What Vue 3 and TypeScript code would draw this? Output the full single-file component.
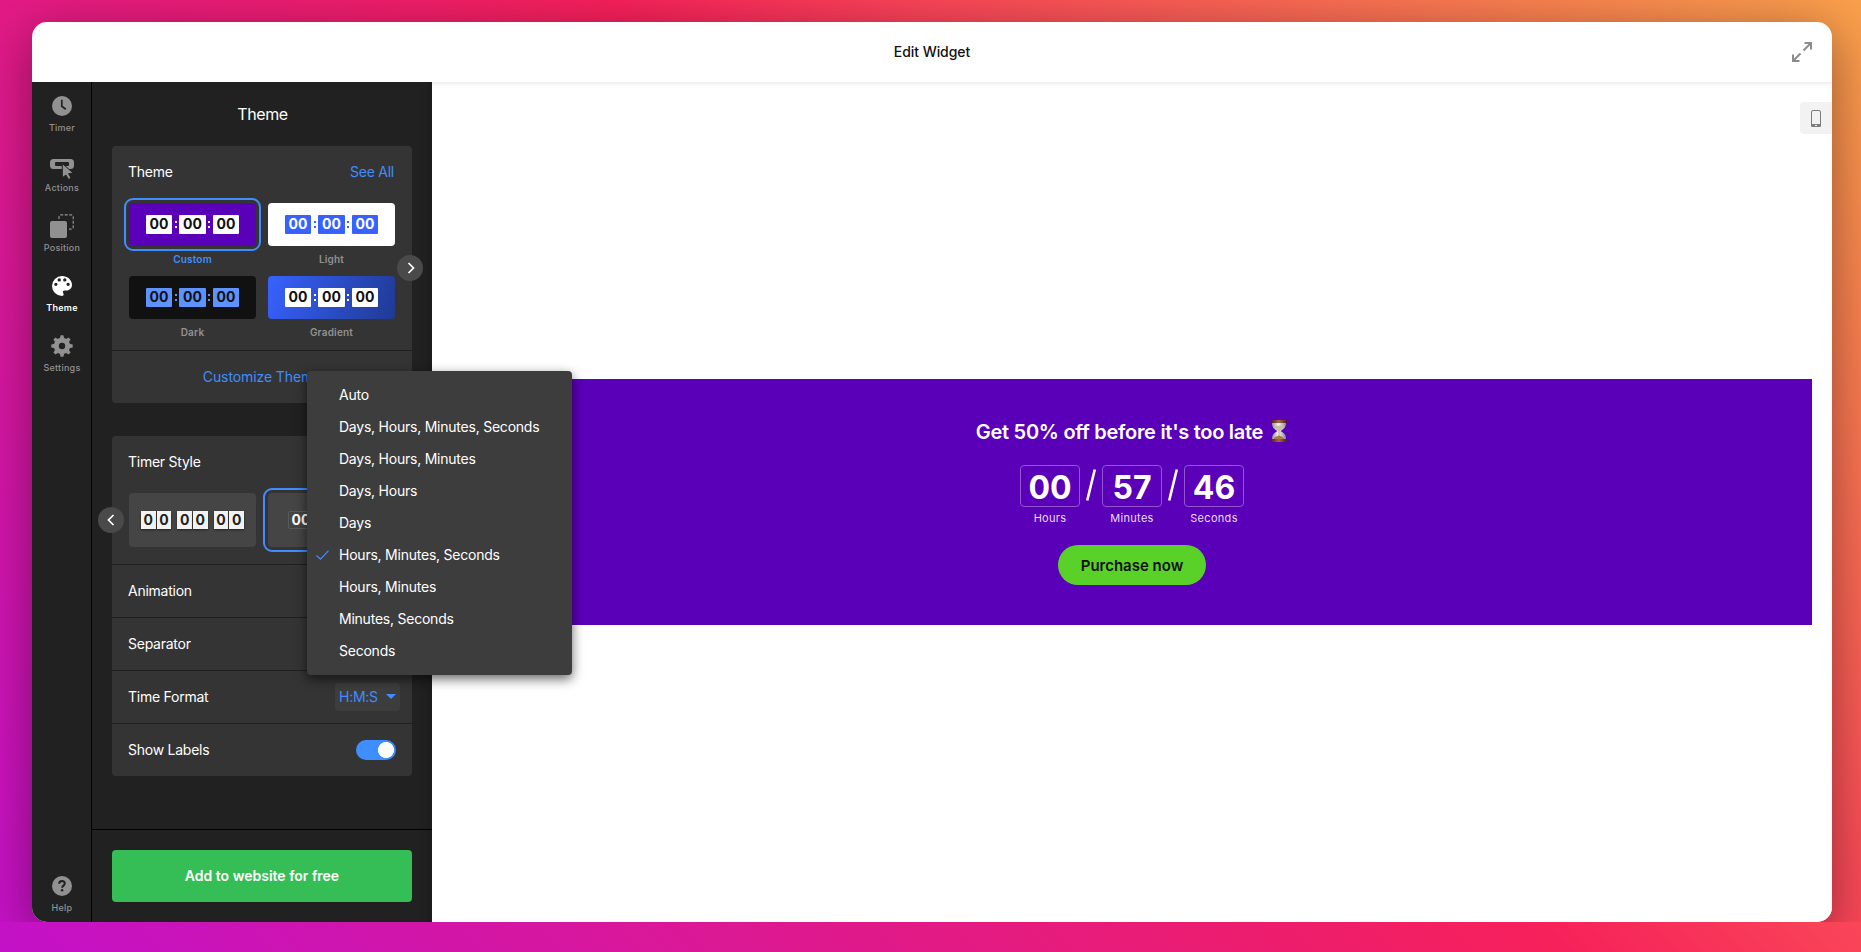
<script setup lang="ts">
interface Theme { name: string; key: string }
const themes: Theme[] = [
  { name: 'Custom', key: 'custom' },
  { name: 'Light', key: 'light' },
  { name: 'Dark', key: 'dark' },
  { name: 'Gradient', key: 'gradient' },
]
const formats: string[] = [
  'Auto', 'Days, Hours, Minutes, Seconds', 'Days, Hours, Minutes', 'Days, Hours', 'Days',
  'Hours, Minutes, Seconds', 'Hours, Minutes', 'Minutes, Seconds', 'Seconds',
]
const selectedFormat = 'Hours, Minutes, Seconds'
const units = [
  { value: '00', label: 'Hours' },
  { value: '57', label: 'Minutes' },
  { value: '46', label: 'Seconds' },
]
</script>

<template>
  <div class="page">
    <div class="stage">
      <div class="window">
        <header class="topbar">
          <span>Edit Widget</span>
          <svg class="expand" width="20" height="20" viewBox="0 0 20 20" fill="none" stroke="#8c8c8c" stroke-width="2">
            <path d="M12.500 1H19v6.500M19 1l-7.500 7.500M7.500 19H1v-6.500M1 19l7.500-7.500" />
          </svg>
        </header>
        <div class="body">
          <nav class="rail">
            <div class="tab">
              <svg width="20" height="20" viewBox="0 0 20 20"><circle cx="10" cy="10" r="10" fill="#919191" /><path d="M9.800 3.800v6.500l4 2.900" fill="none" stroke="#212121" stroke-width="1.700" /></svg>
              <span>Timer</span>
            </div>
            <div class="tab">
              <svg class="actions" width="24" height="20" viewBox="0 0 24 20"><rect x="2.500" y="3.500" width="19" height="5" rx="1" fill="none" stroke="#919191" stroke-width="5" stroke-linejoin="round" /><rect x="5" y="4" width="14" height="4" rx="1" fill="#212121" /><path d="M12.300 5.500l11 9.600-4.700.6 2.500 4.500-2.600 1.200-2.600-4.400-3.600 2.800z" fill="#919191" stroke="#212121" stroke-width="1" /></svg>
              <span>Actions</span>
            </div>
            <div class="tab">
              <svg class="pos" width="24" height="24" viewBox="0 0 24 24"><rect x="0" y="7" width="17" height="17" rx="2" fill="#919191" /><path d="M9 5V2.500A2 2 0 0 1 10.500 .8H21.500A1.800 1.800 0 0 1 23.200 2.500V13.500A1.800 1.800 0 0 1 21.500 15.200H19" fill="none" stroke="#919191" stroke-width="1.200" stroke-dasharray="3 1.500" /></svg>
              <span>Position</span>
            </div>
            <div class="tab active">
              <svg width="20" height="20" viewBox="3 3 18 18"><path fill="#fff" d="M12 3a9 9 0 0 0 0 18c.83 0 1.500-.67 1.500-1.500 0-.39-.15-.74-.39-1.010-.23-.26-.38-.61-.38-.99 0-.83.67-1.500 1.500-1.500H16c2.760 0 5-2.240 5-5 0-4.420-4.030-8-9-8zm-5.500 9a1.500 1.500 0 1 1 0-3 1.500 1.500 0 0 1 0 3zm3-4a1.500 1.500 0 1 1 0-3 1.500 1.500 0 0 1 0 3zm5 0a1.500 1.500 0 1 1 0-3 1.500 1.500 0 0 1 0 3zm3 4a1.500 1.500 0 1 1 0-3 1.500 1.500 0 0 1 0 3z" /></svg>
              <span>Theme</span>
            </div>
            <div class="tab">
              <svg class="gear" width="22" height="22" viewBox="0 0 22 22">
                <g fill="#919191">
                  <path v-for="n in 8" :key="n" d="M8.700 4L9.600 .3h2.800L13.300 4z" :transform="`rotate(${n * 45} 11 11)`" />
                </g>
                <circle cx="11" cy="11" r="5.700" fill="none" stroke="#919191" stroke-width="5" />
              </svg>
              <span>Settings</span>
            </div>
            <div class="tab help">
              <svg width="20" height="20" viewBox="0 0 20 20"><circle cx="10" cy="10" r="10" fill="#919191" /><path d="M7.200 7.800c0-1.700 1.200-2.700 2.800-2.700s2.800 1 2.800 2.500c0 2-2.700 2.100-2.700 4.200" fill="none" stroke="#212121" stroke-width="2" /><circle cx="10.100" cy="14.300" r="1.250" fill="#212121" /></svg>
              <span>Help</span>
            </div>
          </nav>

          <aside class="panel">
            <h1>Theme</h1>
            <section class="card themes">
              <div class="card-head"><span>Theme</span><a>See All</a></div>
              <div class="grid">
                <div v-for="t in themes" :key="t.key" class="theme" :class="t.key">
                  <div class="thumb">
                    <b>00</b><i></i><b>00</b><i></i><b>00</b>
                  </div>
                  <span>{{ t.name }}</span>
                </div>
              </div>
              <div class="customize"><a>Customize Theme</a></div>
              <button class="arrow next"><svg width="8" height="12" viewBox="0 0 8 12"><path d="M1.500 1L6.500 6l-5 5" /></svg></button>
            </section>

            <section class="card">
              <div class="card-head"><span>Timer Style</span></div>
              <div class="styles">
                <div class="style-thumb flip">
                  <div v-for="g in 3" :key="g" class="pair"><b>0</b><b>0</b></div>
                </div>
                <div class="style-thumb boxed"><b>00</b><b>00</b></div>
              </div>
              <div class="row"><span>Animation</span></div>
              <div class="row"><span>Separator</span></div>
              <div class="row"><span>Time Format</span>
                <div class="select">H:M:S<svg width="10" height="5" viewBox="0 0 10 5"><path d="M0 0h10L5 5z" fill="#3e8eff" /></svg></div>
              </div>
              <div class="row"><span>Show Labels</span><div class="toggle"></div></div>
              <button class="arrow prev"><svg width="8" height="12" viewBox="0 0 8 12"><path d="M6.500 1L1.500 6l5 5" /></svg></button>
            </section>
            <footer class="foot"><button class="add">Add to website for free</button></footer>
          </aside>

          <main class="preview">
            <div class="device"><svg width="10" height="17" viewBox="0 0 10 17"><rect x=".5" y=".5" width="9" height="16" rx="1.500" fill="none" stroke="#7d7d7d" /><path d="M0 14h10v1.500a1.500 1.500 0 0 1-1.500 1.500h-7A1.500 1.500 0 0 1 0 15.500z" fill="#7d7d7d" /><rect x="4" y="15" width="2" height="1" fill="#f2f2f2" /></svg></div>
            <div class="banner">
              <h2><span>Get 50% off before it's too late</span>
                <svg class="hourglass" width="18" height="22" viewBox="0 0 18 22">
                  <defs>
                    <linearGradient id="wood" x1="0" x2="1"><stop offset="0" stop-color="#4a2014" /><stop offset=".5" stop-color="#a8674a" /><stop offset="1" stop-color="#451d12" /></linearGradient>
                    <linearGradient id="glass" x1="0" x2="1"><stop offset="0" stop-color="#8f8ba0" /><stop offset=".45" stop-color="#f4f4f2" /><stop offset="1" stop-color="#8d899e" /></linearGradient>
                  </defs>
                  <path d="M2 2.500h14c.3 4-1.500 6.300-5.400 8.500 3.900 2.200 5.700 4.600 5.400 8.500H2c-.3-3.900 1.500-6.300 5.400-8.500C3.500 8.800 1.700 6.500 2 2.500z" fill="url(#glass)" />
                  <path d="M3.300 5.800h11.400c-.6 1.800-2.300 3.300-5 4.700H8.300C5.600 9.100 3.900 7.600 3.300 5.800z" fill="#c9bda6" />
                  <path d="M9 15.500c2.700.8 5 2 5.800 4H3.200c.8-2 3.100-3.200 5.800-4z" fill="#ad7746" />
                  <path d="M8.600 10h.8v6h-.8z" fill="#b6906a" />
                  <rect x="1" y="0" width="16" height="3" rx="1" fill="url(#wood)" /><rect x="1" y="19" width="16" height="3" rx="1" fill="url(#wood)" />
                </svg>
              </h2>
              <div class="timer">
                <template v-for="(u, n) in units" :key="u.label">
                  <svg v-if="n" class="slash" width="22" height="42" viewBox="0 0 22 42"><path d="M7.200 35.500L14.800 4.500" stroke="#fff" stroke-width="2.600" /></svg>
                  <div class="unit"><strong>{{ u.value }}</strong><span>{{ u.label }}</span></div>
                </template>
              </div>
              <button class="cta">Purchase now</button>
            </div>
          </main>
        </div>
        <ul class="menu">
          <li v-for="f in formats" :key="f">
            <svg v-if="f === selectedFormat" width="13" height="10" viewBox="0 0 13 10"><path d="M.5 5.500L4.500 9.200 12.500 .7" fill="none" stroke="#3e8eff" stroke-width="1.200" /></svg>
            {{ f }}
          </li>
        </ul>
      </div>
    </div>
  </div>
</template>

<style>
body { margin: 0; }
</style>

<style scoped>
* { box-sizing: border-box; }
.page { width: 1861px; height: 952px; overflow: hidden; background: linear-gradient(45deg, #c311c8 0%, #f6205a 55.500%, #f94358 66%, #f8a04b 100%); font-family: Inter, "Liberation Sans", sans-serif; font-size: 14px; }
.stage { height: 922px; padding: 22px 29px 0 32px; overflow: hidden; }
.window { position: relative; width: 1800px; height: 900px; border-radius: 15px; box-shadow: 0 12px 50px rgba(0, 0, 0, .4); background: #fff; display: flex; flex-direction: column; }
.topbar { height: 60px; display: flex; align-items: center; justify-content: center; position: relative; color: #111; font-weight: 500; z-index: 1; padding-bottom: 1px; letter-spacing: -.05px; }
.expand { position: absolute; right: 20px; top: 20px; }
.body { flex: 1; display: flex; border-radius: 0 0 15px 15px; overflow: hidden; }
.rail { width: 60px; background: #212121; border-right: 1px solid #000; display: flex; flex-direction: column; align-items: center; padding: 14px 0 0 1px; }
.tab { height: 60px; display: flex; flex-direction: column; align-items: center; color: #919191; font-size: 9px; font-weight: 500; letter-spacing: .25px; }
.tab svg { display: block; margin-bottom: 6px; overflow: visible; }
.tab span { line-height: 12px; }
.tab .actions { margin: 2px 0 4px; }
.tab .pos { margin: -2px 0 4px; }
.tab .gear { margin: -1px 0 5px; }
.tab.active { color: #fff; font-weight: 600; }
.tab.help { margin-top: auto; height: 46px; }
.panel { width: 340px; background: #212121; padding: 0 20px; display: flex; flex-direction: column; box-shadow: inset -10px 0 12px -10px rgba(0, 0, 0, .35); }
h1 { margin: 0; height: 64px; line-height: 65px; text-align: center; color: #fff; font-size: 16px; font-weight: 400; letter-spacing: -.4px; padding-left: 1px; }
a { color: #3e8eff; }
.card { position: relative; background: #343434; border-radius: 4px; color: #fff; margin-bottom: 33px; letter-spacing: -.25px; }
.card-head { height: 52px; padding: 0 18px 2px 16px; display: flex; align-items: center; justify-content: space-between; }
.themes .card-head { height: 57px; padding-bottom: 6px; }
.grid { display: grid; grid-template-columns: 127px 127px; align-content: start; column-gap: 12px; padding: 0 17px; height: 147px; }
.theme { height: 73px; text-align: center; color: #919191; font-size: 10px; font-weight: 600; letter-spacing: .2px; }
.theme > span { display: block; line-height: 12px; margin-top: 7px; }
.thumb { height: 43px; border-radius: 4px; display: flex; align-items: center; justify-content: center; background: #5a00b8; letter-spacing: 0; }
.thumb b { width: 26.500px; height: 19px; line-height: 18px; border-radius: 1px; background: #fff; color: #111; font-size: 14px; font-weight: 700; }
.thumb i { width: 7px; height: 8px; background: linear-gradient(#fff 2px, transparent 2px 5px, #fff 5px 7px, transparent 7px) center / 2px 8px no-repeat; }
.custom { color: #3e8eff; }
.custom .thumb { outline: 2px solid #3e8eff; outline-offset: 3px; }
.light .thumb { background: #fff; }
.light b { background: #3762ff; color: #fff; }
.light i { background-image: linear-gradient(#3762ff 2px, transparent 2px 5px, #3762ff 5px 7px, transparent 7px); }
.dark .thumb { background: #111; }
.dark b { background: #5e92ff; }
.dark i { background-image: linear-gradient(#5e92ff 2px, transparent 2px 5px, #5e92ff 5px 7px, transparent 7px); }
.gradient .thumb { background: linear-gradient(110deg, #3762ff, #1f3a93); }
.customize { height: 53px; border-top: 1px solid #1f1f1f; display: flex; align-items: center; justify-content: center; padding-bottom: 2px; letter-spacing: -.1px; }
.arrow { position: absolute; width: 26px; height: 26px; border: 0; padding: 0; border-radius: 50%; background: #4a4a4a; display: flex; align-items: center; justify-content: center; }
.arrow path { fill: none; stroke: #fff; stroke-width: 1.700; }
.next { right: -11px; top: 109px; }
.next svg { margin-left: 1px; }
.prev { left: -14px; top: 71px; }
.styles { display: flex; gap: 12px; padding: 5px 17px 17px; letter-spacing: 0; }
.style-thumb { flex: none; width: 127px; height: 54px; border-radius: 4px; background: #454545; display: flex; align-items: center; justify-content: center; gap: 6px; }
.pair { display: flex; gap: 1px; }
.pair b { width: 14.700px; height: 18px; line-height: 18px; text-align: center; color: #222; font-size: 14px; font-weight: 700; background: linear-gradient(#f2f2f2 49%, #ddd 50%, #f2f2f2 52%); box-shadow: 0 1px 2px rgba(0, 0, 0, .5); }
.boxed { outline: 2px solid #3e8eff; outline-offset: 3px; justify-content: flex-start; padding-left: 20px; }
.boxed b { width: 26px; height: 18px; line-height: 16px; text-align: center; border: 1px solid #5a5a5a; border-radius: 2px; font-size: 14px; }
.row { height: 53px; border-top: 1px solid #1f1f1f; padding: 0 16px; display: flex; align-items: center; justify-content: space-between; }
.row > span { padding-bottom: 1px; }
.select { width: 65px; height: 28px; margin: -1px -4px 0 0; padding: 0 4px; border-radius: 4px; background: #3d3d3d; color: #3e8eff; display: flex; align-items: center; justify-content: space-between; }
.toggle { width: 40px; height: 20px; border-radius: 10px; background: radial-gradient(circle at 30px 10px, #fff 7.700px, #3e8eff 8.300px); }
.foot { margin: auto -20px 0; border-top: 1px solid #000; padding: 20px; }
.add { display: block; width: 300px; height: 52px; border: 0; padding: 0 0 2px; border-radius: 4px; background: #35bd56; color: #fff; font: 600 14px Inter, sans-serif; }
.preview { flex: 1; position: relative; padding: 0 20px; background: linear-gradient(#ececec, #fafafa 3px, #fff 7px) top / 100% 7px no-repeat #fff; display: flex; flex-direction: column; justify-content: center; }
.device { position: absolute; right: 0; top: 20px; width: 32px; height: 32px; background: #f2f2f2; border-radius: 4px 0 0 4px; display: flex; align-items: center; justify-content: center; }
.banner { height: 246px; background: #5a00b8; color: #fff; display: flex; flex-direction: column; align-items: center; padding-top: 40px; }
h2 { margin: 0; display: flex; align-items: center; gap: 7px; font-size: 20px; font-weight: 600; line-height: 26px; letter-spacing: -.28px; }
.hourglass { margin-top: -3px; }
.timer { display: flex; margin-top: 20px; height: 60px; }
.unit { width: 60px; text-align: center; }
.unit strong { display: block; height: 42px; line-height: 43px; border: 1px solid #9255d0; border-radius: 4px; font-size: 32px; font-weight: 700; }
.unit span { display: block; margin-top: 4px; line-height: 14px; font-size: 11px; letter-spacing: .3px; color: #eadcf7; }
.cta { width: 148px; height: 40px; margin-top: 20px; border: 0; border-radius: 20px; background: #5ad128; color: #111; font: 600 15px Inter, sans-serif; }
.menu { position: absolute; left: 275px; top: 349px; width: 265px; height: 304px; margin: 0; padding: 8px 0; list-style: none; background: #3d3d3d; border-radius: 4px; color: #fff; box-shadow: 0 4px 12px rgba(0, 0, 0, .6); letter-spacing: -.23px; z-index: 3; }
.menu li { height: 32px; line-height: 32px; padding-left: 32px; position: relative; }
.menu svg { position: absolute; left: 9px; top: 11px; }
</style>
